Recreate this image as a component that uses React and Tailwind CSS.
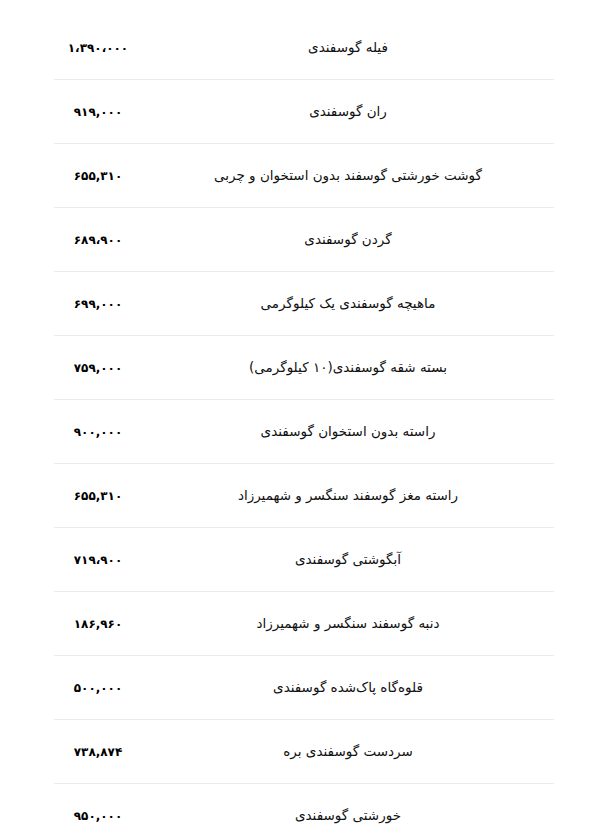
import React from 'react';

const rows = [
  ['فیله گوسفندی', '۱،۳۹۰،۰۰۰'],
  ['ران گوسفندی', '۹۱۹,۰۰۰'],
  ['گوشت خورشتی گوسفند بدون استخوان و چربی', '۶۵۵,۳۱۰'],
  ['گردن گوسفندی', '۶۸۹،۹۰۰'],
  ['ماهیچه گوسفندی یک کیلوگرمی', '۶۹۹,۰۰۰'],
  ['بسته شقه گوسفندی(۱۰ کیلوگرمی)', '۷۵۹,۰۰۰'],
  ['راسته بدون استخوان گوسفندی', '۹۰۰,۰۰۰'],
  ['راسته مغز گوسفند سنگسر و شهمیرزاد', '۶۵۵,۳۱۰'],
  ['آبگوشتی گوسفندی', '۷۱۹،۹۰۰'],
  ['دنبه گوسفند سنگسر و شهمیرزاد', '۱۸۶,۹۶۰'],
  ['قلوه‌گاه پاک‌شده گوسفندی', '۵۰۰,۰۰۰'],
  ['سردست گوسفندی بره', '۷۳۸,۸۷۴'],
  ['خورشتی گوسفندی', '۹۵۰,۰۰۰'],
];

function PriceTable() {
  return (
    <div className="bg-white min-h-screen pt-4 pl-[54px] font-['DejaVu_Sans',sans-serif] text-black">
      <div className="w-[500px]">
        {rows.map(([name, price], i) => (
          <div key={i} className="flex h-16 items-center border-b border-[#ebebeb]">
            <div className="w-[88px] text-center text-[12px] font-bold" dir="rtl">{price}</div>
            <div className="flex-1 text-center text-[13.5px] text-[#111]" dir="rtl">{name}</div>
          </div>
        ))}
      </div>
    </div>
  );
}

export default function App() {
  return <PriceTable />;
}
